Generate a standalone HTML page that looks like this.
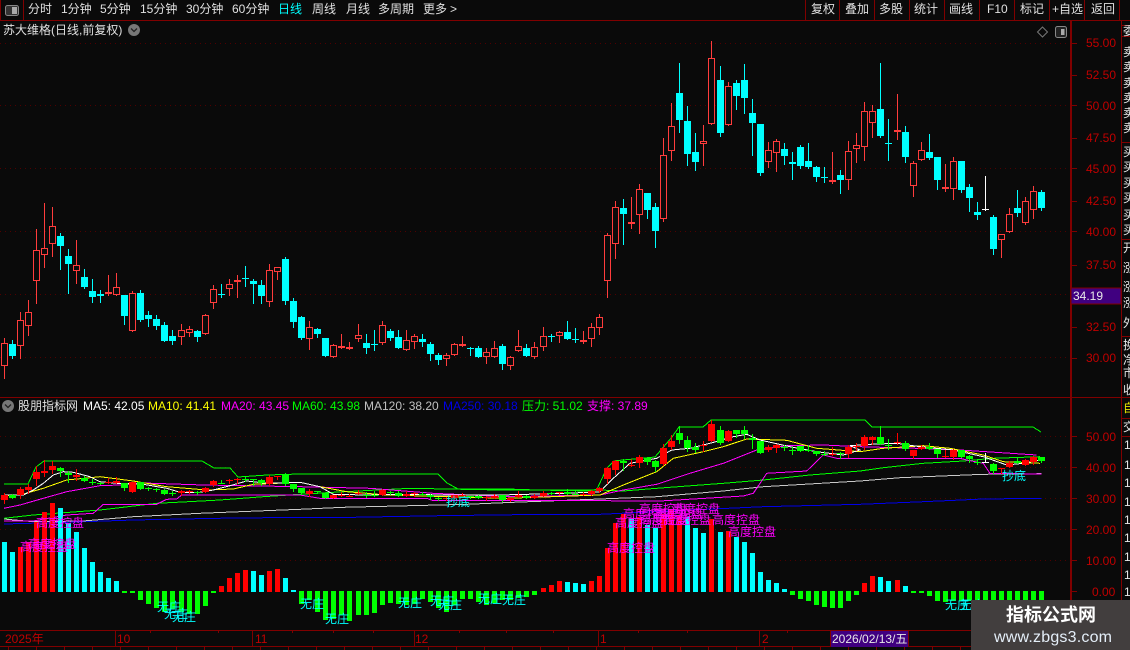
<!DOCTYPE html>
<html><head><meta charset="utf-8"><title>K线</title>
<style>
html,body{margin:0;padding:0;background:#0a0a0a;width:1130px;height:650px;overflow:hidden}
svg{display:block;position:absolute;left:0;top:0}
text{font-family:"Liberation Sans","WenQuanYi Zen Hei","Noto Sans CJK SC",sans-serif;font-size:12px}
.m text{fill:#e0e0e0}
.a text{fill:#c00000}
.h text{fill:#f0f}
.c text{fill:#0ff}
.s text{fill:#e8e8e8}
</style></head><body>
<svg width="1130" height="650" viewBox="0 0 1130 650" xmlns="http://www.w3.org/2000/svg">
<rect width="1130" height="650" fill="#0a0a0a"/>
<g id="grid" shape-rendering="crispEdges"></g>
<g id="lines" shape-rendering="crispEdges"></g>
<g id="hist" shape-rendering="crispEdges"></g>
<g id="top" shape-rendering="crispEdges"></g>
<g id="bot" shape-rendering="crispEdges"></g>
<g id="frame" shape-rendering="crispEdges"></g>

<g class="m">
<text x="28" y="13">分时</text><text x="61" y="13">1分钟</text><text x="100" y="13">5分钟</text><text x="140" y="13">15分钟</text><text x="186" y="13">30分钟</text><text x="232" y="13">60分钟</text>
<text x="278" y="13" style="fill:#0ff">日线</text><text x="312" y="13">周线</text><text x="346" y="13">月线</text><text x="378" y="13">多周期</text><text x="423" y="13">更多</text><text x="450" y="13">&gt;</text>
<text x="811" y="13">复权</text><text x="845" y="13">叠加</text><text x="879" y="13">多股</text><text x="914" y="13">统计</text><text x="949" y="13">画线</text><text x="987" y="13">F10</text><text x="1020" y="13">标记</text><text x="1052" y="13">+自选</text><text x="1091" y="13">返回</text>
<text x="3" y="34">苏大维格(日线,前复权)</text>
<text x="18" y="410">股朋指标网</text>
</g>
<g>
<text x="83" y="410" fill="#fff">MA5: 42.05</text>
<text x="148" y="410" fill="#ff0">MA10: 41.41</text>
<text x="221" y="410" fill="#f0f">MA20: 43.45</text>
<text x="292" y="410" fill="#0f0">MA60: 43.98</text>
<text x="364" y="410" fill="#c0c0c0">MA120: 38.20</text>
<text x="443" y="410" fill="#0000e6">MA250: 30.18</text>
<text x="522" y="410" fill="#0f0">压力: 51.02</text>
<text x="587" y="410" fill="#f0f">支撑: 37.89</text>
</g>

<g class="a">
<text x="1086" y="47">55.00</text><text x="1086" y="79">52.50</text><text x="1086" y="110">50.00</text><text x="1086" y="142">47.50</text><text x="1086" y="173">45.00</text><text x="1086" y="205">42.50</text><text x="1086" y="236">40.00</text><text x="1086" y="269">37.50</text><text x="1086" y="331">32.50</text><text x="1086" y="362">30.00</text>
<text x="1086" y="441">50.00</text><text x="1086" y="472">40.00</text><text x="1086" y="503">30.00</text><text x="1086" y="534">20.00</text><text x="1086" y="565">10.00</text><text x="1092" y="596">0.00</text>
<text x="5" y="643">2025年</text><text x="117" y="643">10</text><text x="255" y="643">11</text><text x="415" y="643">12</text><text x="600" y="643">1</text><text x="762" y="643">2</text>
</g>

<rect x="1071" y="288" width="50" height="16" fill="#400080" stroke="#800000"/>
<text x="1073" y="300" fill="#e8e8e8">34.19</text>
<rect x="831" y="631" width="77" height="16" fill="#400080"/>
<text x="832" y="643" fill="#e8e8e8">2026/02/13/五</text>

<g class="s">
<text x="1123" y="35">委</text>
<text x="1123" y="56">卖</text><text x="1123" y="71">卖</text><text x="1123" y="87">卖</text><text x="1123" y="102">卖</text><text x="1123" y="117">卖</text><text x="1123" y="132">卖</text>
<text x="1123" y="156">买</text><text x="1123" y="171">买</text><text x="1123" y="187">买</text><text x="1123" y="202">买</text><text x="1123" y="219">买</text><text x="1123" y="234">买</text>
<text x="1123" y="252">开</text><text x="1123" y="272">涨</text><text x="1123" y="291">涨</text><text x="1123" y="307">涨</text><text x="1123" y="327">外</text>
<text x="1123" y="349">换</text><text x="1123" y="364">净</text><text x="1123" y="377">市</text><text x="1123" y="394">收</text>
<text x="1123" y="412" fill="#ff0" style="fill:#e6e600">自</text>
<text x="1123" y="431">交</text>
<text x="1124" y="449">1</text><text x="1124" y="469">1</text><text x="1124" y="487">1</text><text x="1124" y="506">1</text><text x="1124" y="524">1</text><text x="1124" y="542">1</text><text x="1124" y="561">1</text><text x="1124" y="579">1</text><text x="1124" y="596">1</text>
</g>

<g class="h">
<text x="36" y="527">高度控盘</text><text x="28" y="548">高度控盘</text><text x="20" y="551">高度控盘</text>
<text x="607" y="552">高度控盘</text><text x="615" y="527">高度控盘</text><text x="623" y="518">高度控盘</text><text x="640" y="524">高度控盘</text><text x="639" y="513">高度控盘</text><text x="655" y="518">高度控盘</text><text x="663" y="524">高度控盘</text><text x="672" y="513">高度控盘</text><text x="712" y="524">高度控盘</text><text x="728" y="536">高度控盘</text>
</g>
<g class="c">
<text x="157" y="611">无庄</text><text x="164" y="618">无庄</text><text x="172" y="621">无庄</text>
<text x="300" y="608">无庄</text><text x="325" y="623">无庄</text><text x="398" y="607">无庄</text><text x="430" y="605">无庄</text><text x="438" y="609">无庄</text><text x="478" y="603">无庄</text><text x="502" y="604">无庄</text>
<text x="945" y="609">无庄</text><text x="960" y="609">无庄</text>
<text x="446" y="506">抄底</text><text x="1002" y="480">抄底</text>
</g>

<!-- icons -->
<rect x="5.5" y="5.5" width="13" height="10" rx="2" fill="#333" stroke="#888"/>
<rect x="12" y="7" width="5" height="7" fill="#aaa"/>
<circle cx="134" cy="30" r="6" fill="#777"/><path d="M131 28.5l3 3 3-3" fill="none" stroke="#222" stroke-width="1.3"/>
<circle cx="8" cy="406" r="6" fill="#777"/><path d="M5 404.5l3 3 3-3" fill="none" stroke="#222" stroke-width="1.3"/>
<path d="M1042.5 27l5 5-5 5-5-5z" fill="none" stroke="#777"/>
<rect x="1055.5" y="26.5" width="11" height="11" rx="2" fill="#222" stroke="#888"/>
<rect x="1061" y="29" width="3.5" height="6" fill="#aaa"/>

<!-- watermark -->
<rect x="971" y="600" width="159" height="50" fill="#423e3e"/>
<text x="1006" y="621" fill="#fff" style="font-size:18px;font-weight:bold">指标公式网</text>
<text x="994" y="642" fill="#e4eef8" style="font-size:16px;letter-spacing:.2px">www.zbgs3.com</text>
</svg>
<script>
var D=[
"R 338 343 366 378","C 340 344 356 358","R 312 320 346 358","R 300 312 326 335","R 229 250 281 303","R 203 248 255 267","R 207 226 244 256","C 233 236 246 269","C 249 256 264 293","R 240 265 271 283",
"C 269 277 287 288","C 279 291 297 302","C 290 294 296 302","R 275 292 294 295","R 273 287 295 295","C 295 295 316 324","R 291 293 331 331","C 290 293 320 321","C 311 315 319 326","C 315 319 326 329",
"C 322 325 341 341","C 330 336 341 344","R 324 330 337 344","R 326 329 333 336","C 330 331 337 341","R 314 315 334 334","R 285 289 303 308","C 284 294 295 297","R 279 284 289 295","R 275 280 281 297",
"C 266 278 279 286","C 279 281 284 303","C 280 285 296 303","R 264 270 302 306","R 267 267 272 279","C 257 259 301 304","C 298 301 322 327","C 316 317 338 339","R 321 327 339 349","C 328 329 334 337",
"C 338 338 356 356","R 344 345 357 357","R 334 346 348 348","R 342 347 349 349","R 324 335 339 341","C 334 343 348 353","C 330 344 345 350","R 321 325 343 344","C 329 331 338 340","C 330 337 348 348",
"R 330 340 350 350","R 334 336 342 348","C 334 339 342 346","C 342 344 354 360","C 353 355 360 364","R 353 355 359 365","R 343 344 355 355","R 336 344 346 346","C 347 348 349 355","C 346 348 357 357",
"R 348 352 357 363","R 341 348 357 357","C 344 346 364 369","R 356 357 366 369","R 330 346 351 351","C 344 348 356 356","R 342 347 357 358","R 327 336 347 350","C 334 336 337 341","R 331 332 336 342",
"C 321 332 339 339","C 328 339 340 342","R 331 340 341 343","R 323 327 339 346","R 314 317 328 334","R 233 235 281 297","R 201 207 244 258","C 199 208 214 244","R 197 222 224 228","R 184 189 215 233",
"C 193 193 210 218","C 203 207 231 247","R 138 155 219 221","R 103 126 151 160","C 63 93 120 132","C 106 121 154 165","C 133 152 162 170","R 125 141 144 165","R 41 58 124 124","C 66 80 133 136",
"R 82 86 125 125","C 80 83 96 109","C 64 80 98 113","C 99 113 123 155","C 124 124 173 175","R 142 150 162 167","R 139 141 153 171","C 143 149 156 164","C 152 162 164 179","C 145 147 166 168",
"C 143 161 167 168","C 166 167 177 181","C 167 177 178 182","R 152 180 182 183","C 170 175 180 193","R 141 151 180 189","R 133 145 149 162","R 102 111 147 160","R 105 111 123 137","C 63 109 136 137",
"C 119 143 144 160","R 94 130 132 139","C 126 132 157 162","R 161 163 186 196","R 142 150 160 160","C 134 152 158 159","C 157 157 180 189","R 164 187 189 191","R 157 161 189 199","C 161 161 190 192",
"C 184 187 198 211","C 202 212 215 219","W 176 209 210 210","C 215 217 249 254","R 234 234 240 257","R 208 214 232 232","C 190 208 213 216","R 197 201 223 224","R 186 191 210 218","C 190 192 208 210"
];
var H=[50,40,45,50,70,80,89,84,69,60,44,30,20,14,11,-1,-1,-8,-12,-16,-20,-17,-20,-22,-22,-14,-1,6,14,19,22,21,17,21,23,14,2,-12,
-8,-20,-28,-27,-23,-29,-23,-23,-21,-13,-11,-12,-13,-12,-7,-10,-16,-20,-13,-7,-7,-10,-13,-11,-8,-8,-6,-5,-3,4,7,11,10,9,8,11,16,
44,69,78,73,75,67,64,78,82,77,75,64,59,73,60,61,55,50,39,20,12,9,3,-3,-7,-9,-13,-15,-16,-16,-9,-3,9,16,15,11,12,6,-1,-1,-4,-9,-10,-9,-9,-9,-9,-9,-9,-9,-9,-9,-9,-9,-9];
var HC={};[0,1,7,8,9,10,11,12,13,14,31,32,35,36,70,71,72,78,80,81,85,86,87,89,91,92,93,94,95,96,97,109,110,112].forEach(function(i){HC[i]=1});
function P(i){return 4+8*i+(i>=22)+(i>=44)+(i>=67)+(i>=89)+(i>=111)}
var RED="#ff3c3c",CY="#00ffff",t="",b="",h="";
D.forEach(function(s,i){
 var a=s.split(" "),T=a[0],y1=+a[1],y2=+a[2],y3=+a[3],y4=+a[4],p=P(i);
 var col=T=="R"?RED:T=="C"?CY:"#fff";
 t+='<path d="M'+(p+.5)+' '+y1+'V'+y2+'M'+(p+.5)+' '+y3+'V'+(y4+1)+'" stroke="'+col+'"/>';
 if(T=="R"&&y3-y2>2) t+='<rect x="'+(p-2.5)+'" y="'+(y2+.5)+'" width="6" height="'+(y3-y2-1)+'" fill="#0a0a0a" stroke="'+RED+'"/>';
 else t+='<rect x="'+(p-3)+'" y="'+y2+'" width="7" height="'+Math.max(y3-y2,T=="R"?2:1)+'" fill="'+col+'"/>';
 var f=function(y){return Math.round(420.65+.2468*(y-43.3))};
 var c2=T=="R"?"#ff0000":T=="C"?"#00ff00":"#fff";
 var a1=f(y1),a2=f(y2),a3=f(y3),a4=f(y4);
 b+='<path d="M'+(p+.5)+' '+a1+'V'+(a4+1)+'" stroke="'+c2+'"/><rect x="'+(p-3)+'" y="'+a2+'" width="7" height="'+Math.max(a3-a2,1)+'" fill="'+c2+'"/>';
 var v=H[i];
 if(v>0)h+='<rect x="'+(p-2)+'" y="'+(592-v)+'" width="5" height="'+v+'" fill="'+(HC[i]?"#00ffff":"#ff0000")+'"/>';
 else h+='<rect x="'+(p-2)+'" y="591" width="5" height="'+(1-v)+'" fill="#00ff00"/>';
});
function Z(o,a){var r=[];for(var i=0;i<a.length;i+=2)r.push((o+a[i]/3).toFixed(1)+","+(395+a[i+1]/3).toFixed(1));return r.join(" ")}
function L(col,arr){var s=arr.map(function(q){return Z(q[0],q[1])}).join(" ");return '<polyline points="'+s+'" fill="none" stroke="'+col+'"/>'}
var l="";
l+=L("#0000e6",[[0,[12,387,200,382,400,375,650,370,900,367]],[300,[160,367,420,362,740,358,900,358]],[590,[300,345,520,335,810,328]],[850,[220,320,400,312,575,310]]]);
l+=L("#c8c8c8",[[0,[12,372,100,380,250,378,400,365,600,355,900,343]],[300,[130,337,330,332,500,328,640,322,900,312]],[590,[200,305,400,288,520,275,810,258]],[850,[150,248,400,238,575,236]]]);
l+=L("#00ff00",[[0,[12,370,100,360,300,345,470,325,530,322,660,315,790,305,900,298]],[300,[100,292,330,280,600,285,900,285]],[590,[100,288,200,280,400,265,520,255,660,240,810,228]],[850,[100,218,220,205,340,198,430,190,570,185]]]);
l+=L("#ff00ff",[[0,[12,378,100,378,200,360,280,355,310,328,470,328,500,313,530,312,545,300,900,300]],[300,[60,310,380,310,400,317,900,317]],[590,[210,318,460,303,490,295,530,235,650,228,700,180,740,190,810,190]],[850,[330,190,350,195,400,205,420,235,575,237]]]);
l+=L("#ff00ff",[[0,[12,340,60,330,130,310,200,290,300,272,360,270,430,264,610,270,900,275]],[300,[210,280,400,295,620,305,900,300]],[590,[100,285,200,268,300,235,400,205,500,165,590,152,700,150,810,155]],[850,[200,160,330,165,560,180]]]);
l+=L("#ffff00",[[0,[12,302,60,300,130,280,200,255,300,245,400,258,500,275,620,285,700,282,760,268,900,262]],[300,[60,275,140,290,260,300,450,305,620,310,900,300]],[590,[100,270,200,230,250,190,340,170,400,155,470,132,590,136,680,160,810,170]],[850,[100,160,220,152,300,160,400,180,460,200,570,205]]]);
l+=L("#ffffff",[[0,[12,300,70,300,100,285,130,265,160,240,190,230,220,232,270,245,300,260,350,265,430,268,500,280,540,292,600,292,640,285,690,272,740,258,800,265,900,262]],[300,[60,275,100,298,200,300,300,298,450,300,600,300,800,295,900,290]],[590,[30,290,70,250,120,205,200,190,245,165,300,160,360,145,430,125,470,118,510,135,600,155,680,170,760,180,810,165]],[850,[0,152,60,148,140,145,210,155,310,165,400,185,470,210,520,205,570,195]]]);
l+='<polyline points="4,484 28,484 36,467 44,461 202,461 214,468 230,468 238,477 267,475 300,474 438,474 447,483 458,489 507,489 537,490 590,491 597,489 607,468 614,461 623,460 655,457 672,437 679,427 703,427 711,420 865,420 872,427 1033,427 1041,432" fill="none" stroke="#00ff00"/>';
var g="";
[43,105,168,231,294,357,436,467,498,529,560].forEach(function(y){g+='<line x1="0" x2="1070" y1="'+(y+.5)+'" y2="'+(y+.5)+'" stroke="#500000" stroke-dasharray="1 4"/>'});
var DR="#800000",fr="";
function hl(x1,x2,y){fr+='<line x1="'+x1+'" x2="'+x2+'" y1="'+(y+.5)+'" y2="'+(y+.5)+'" stroke="'+DR+'"/>'}
function vl(x,y1,y2){fr+='<line x1="'+(x+.5)+'" x2="'+(x+.5)+'" y1="'+y1+'" y2="'+y2+'" stroke="'+DR+'"/>'}
hl(0,1130,20);hl(0,1130,397);hl(0,971,630);hl(0,971,646);
vl(0,0,20);vl(23,0,20);
[805,839,874,909,944,979,1014,1049,1084,1119].forEach(function(x){vl(x,0,20)});
vl(1070,20,650);vl(1071,20,650);vl(1121,20,650);
[25,36,142,239,336,397,418,436].forEach(function(y){hl(1122,1130,y)});
[43,75,105,138,168,201,231,265,327,358,436,467,498,529,560,591].forEach(function(y){hl(1071,1077,y)});
[115,252,414,598,759,830,908].forEach(function(x){vl(x,630,647)});
[150,218,292,333,373,459,506,553,638,687,787].forEach(function(x){vl(x,630,633)});
for(var x=8;x<971;x+=28)vl(x,647,650);
document.getElementById("grid").innerHTML=g;
document.getElementById("lines").innerHTML=l;
document.getElementById("hist").innerHTML=h;
document.getElementById("top").innerHTML=t;
document.getElementById("bot").innerHTML=b;
document.getElementById("frame").innerHTML=fr;
</script>
</body></html>
